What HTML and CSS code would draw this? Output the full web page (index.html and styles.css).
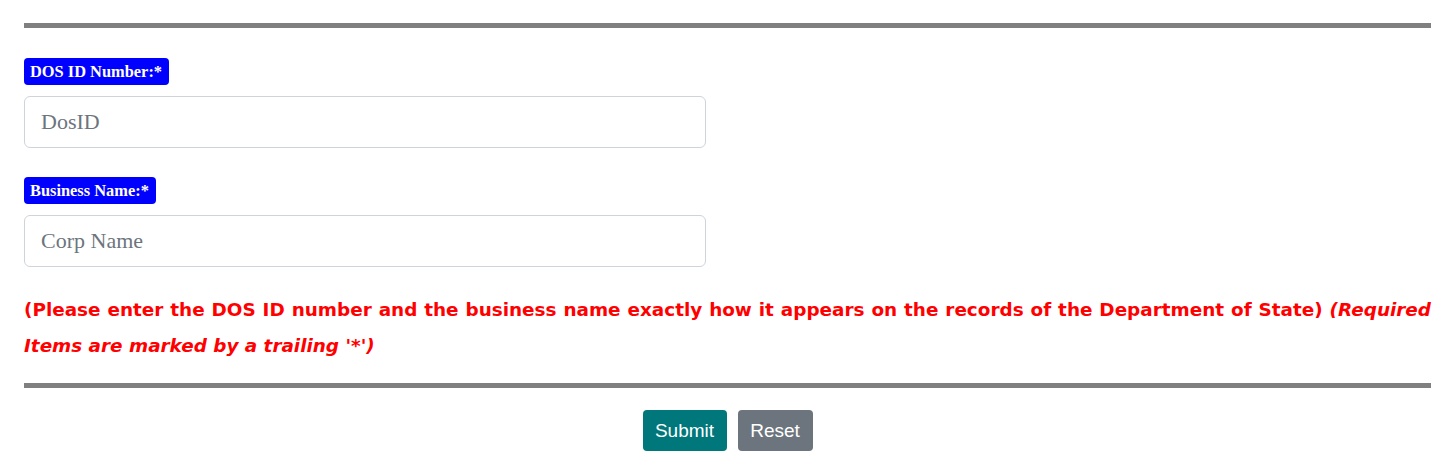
FILE: index.html
```html
<!DOCTYPE html>
<html>
<head>
<meta charset="utf-8">
<link rel="stylesheet" href="styles.css">
</head>
<body>
<div class="page">
  <hr class="rule">
  <form class="form">
    <div class="field">
      <label class="badge">DOS ID Number:*</label>
      <input class="input" type="text" placeholder="DosID">
    </div>
    <div class="field">
      <label class="badge">Business Name:*</label>
      <input class="input" type="text" placeholder="Corp Name">
    </div>
    <p class="note">(Please enter the DOS ID number and the business name exactly how it appears on the records of the Department of State) <em>(Required Items are marked by a trailing '*')</em></p>
    <hr class="rule rule-bottom">
    <div class="actions">
      <button type="button" class="btn btn-submit">Submit</button>
      <button type="button" class="btn btn-reset">Reset</button>
    </div>
  </form>
</div>
</body>
</html>
```
FILE: styles.css
```css
html, body {
  margin: 0;
  padding: 0;
  background: #fff;
}
.page {
  padding: 23px 23px 0 24px;
}
.rule {
  border: 0;
  margin: 0;
  height: 5px;
  background: #808080;
}
.form {
  display: flex;
  flex-direction: column;
}
.field {
  display: flex;
  flex-direction: column;
  align-items: flex-start;
  margin-top: 29px;
}
.field:first-child {
  margin-top: 30px;
}
.badge {
  box-sizing: border-box;
  height: 27px;
  line-height: 27px;
  padding: 0 7px 0 6px;
  background: #0000ff;
  color: #fff;
  font-family: "Liberation Serif", "Times New Roman", serif;
  font-weight: bold;
  font-size: 16.4px;
  border-radius: 4px;
}
.input {
  box-sizing: border-box;
  margin-top: 11px;
  width: 682px;
  height: 52px;
  border: 1px solid #ced4da;
  border-radius: 6px;
  padding: 0 16px;
  font-family: "Liberation Serif", "Times New Roman", serif;
  font-size: 22px;
  color: #212529;
  outline: none;
}
.input::placeholder {
  color: #6c757d;
}
.note {
  margin: 25px 0 0;
  color: #ff0000;
  font-family: "DejaVu Sans", Verdana, sans-serif;
  font-weight: bold;
  font-size: 18.4px;
  line-height: 36px;
  text-align: justify;
}
.note em {
  font-style: italic;
}
.rule-bottom {
  margin-top: 19px;
}
.actions {
  display: flex;
  justify-content: center;
  gap: 11px;
  margin-top: 22px;
}
.btn {
  box-sizing: border-box;
  height: 41px;
  padding: 0 13px;
  border: 0;
  border-radius: 4px;
  color: #fff;
  font-family: "Liberation Sans", Arial, sans-serif;
  font-size: 19px;
  cursor: pointer;
}
.btn-submit {
  background: #00777a;
  width: 84px;
  padding: 0;
}
.btn-reset {
  background: #6c757d;
  width: 75px;
  padding: 0;
}
```
